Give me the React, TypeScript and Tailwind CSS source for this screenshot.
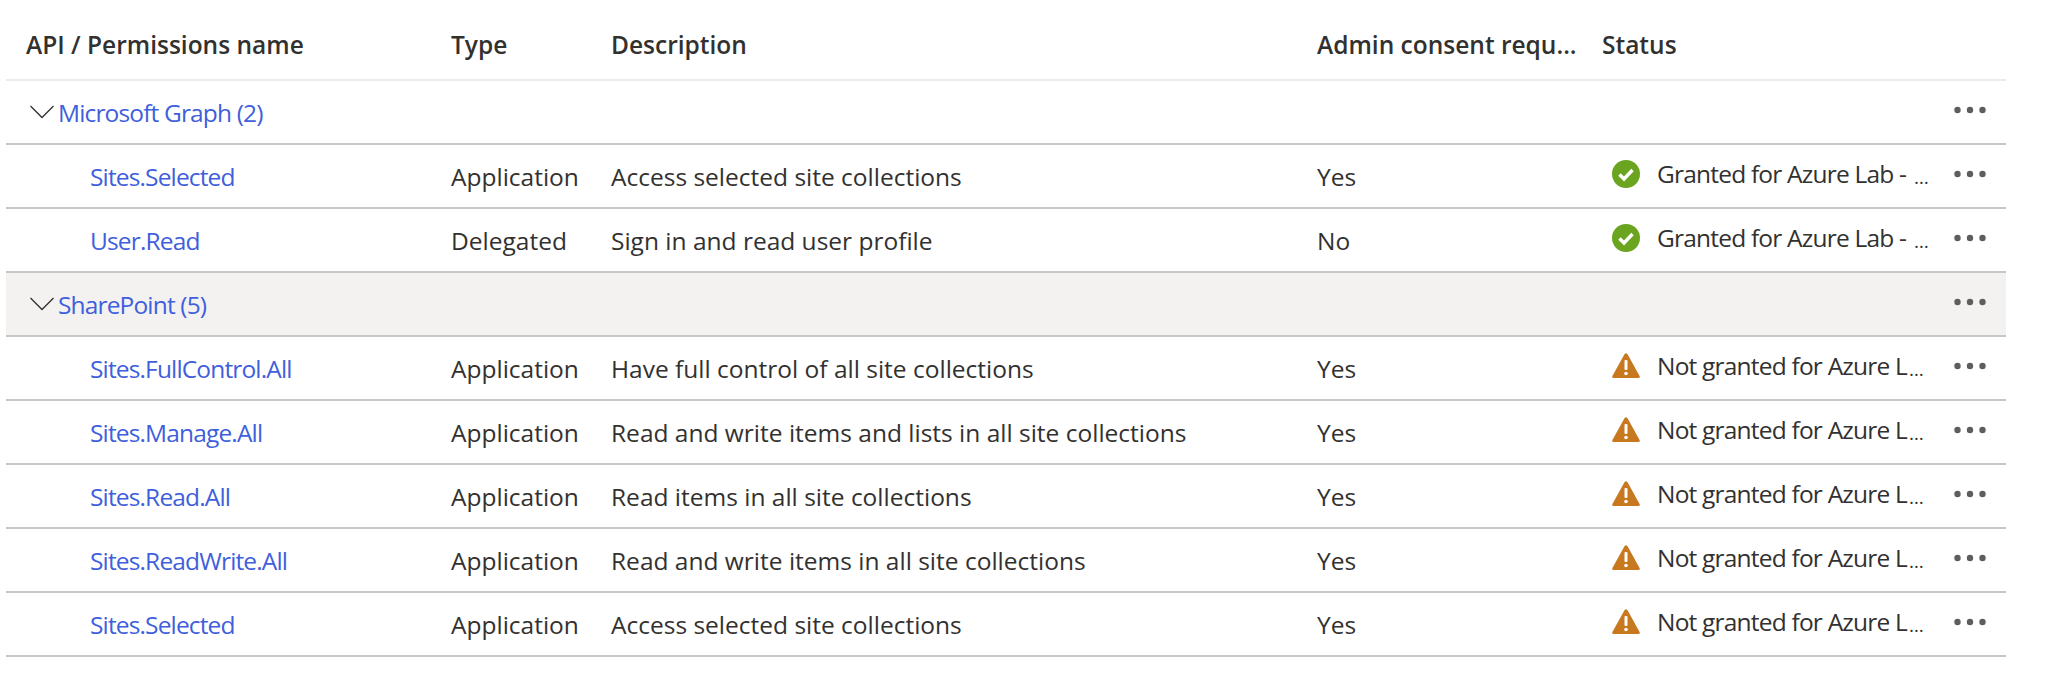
const groups = [
  {
    name: 'Microsoft Graph (2)',
    hovered: false,
    items: [
      { name: 'Sites.Selected', type: 'Application', description: 'Access selected site collections', consent: 'Yes', granted: true },
      { name: 'User.Read', type: 'Delegated', description: 'Sign in and read user profile', consent: 'No', granted: true },
    ],
  },
  {
    name: 'SharePoint (5)',
    hovered: true,
    items: [
      { name: 'Sites.FullControl.All', type: 'Application', description: 'Have full control of all site collections', consent: 'Yes', granted: false },
      { name: 'Sites.Manage.All', type: 'Application', description: 'Read and write items and lists in all site collections', consent: 'Yes', granted: false },
      { name: 'Sites.Read.All', type: 'Application', description: 'Read items in all site collections', consent: 'Yes', granted: false },
      { name: 'Sites.ReadWrite.All', type: 'Application', description: 'Read and write items in all site collections', consent: 'Yes', granted: false },
      { name: 'Sites.Selected', type: 'Application', description: 'Access selected site collections', consent: 'Yes', granted: false },
    ],
  },
];

const gridCols = 'grid grid-cols-[445px_160px_706px_285px_338px_66px]';

function MoreDots() {
  return (
    <svg width="32" height="8" viewBox="0 0 32 8" className="block text-[#605e5c]">
      <circle cx="3.5" cy="4" r="3.2" fill="currentColor" />
      <circle cx="16" cy="4" r="3.2" fill="currentColor" />
      <circle cx="28.5" cy="4" r="3.2" fill="currentColor" />
    </svg>
  );
}

function Chevron() {
  return (
    <svg width="24" height="14" viewBox="0 0 24 14" className="shrink-0 -translate-y-[2px]">
      <path d="M0.5 1 L12 12.5 L23.5 1" fill="none" stroke="#323130" strokeWidth="1.3" />
    </svg>
  );
}

function GrantedIcon() {
  return (
    <svg width="28" height="28" viewBox="0 0 28 28" className="shrink-0">
      <circle cx="14" cy="14" r="14" fill="#6ba41f" />
      <path d="M7.5 14.5 L12 19 L20.5 10" fill="none" stroke="#fff" strokeWidth="3.4" />
    </svg>
  );
}

function WarningIcon() {
  return (
    <svg width="28" height="26" viewBox="0 0 28 26" className="shrink-0">
      <path
        d="M12.6 1 Q14 -0.4 15.4 1 L27.6 23 Q28.4 25 26.2 25 L1.8 25 Q-0.4 25 0.4 23 Z"
        fill="#c8781e"
      />
      <rect x="12.5" y="7" width="3" height="10" rx="1" fill="#fff" />
      <circle cx="14" cy="20.5" r="1.8" fill="#fff" />
    </svg>
  );
}

function StatusCell({ granted }: { granted: boolean }) {
  return (
    <div className="flex items-center pl-[10px] -translate-y-[2px]">
      <div className="w-[28px] flex justify-center">{granted ? <GrantedIcon /> : <WarningIcon />}</div>
      <div className="ml-[17px] flex items-end tracking-[-0.8px] whitespace-nowrap">
        <span>{granted ? 'Granted for Azure Lab -' : 'Not granted for Azure L'}</span>
        <span className={granted ? 'ml-[8px] text-[19px] tracking-normal leading-[30px]' : 'ml-[2px] text-[19px] tracking-normal leading-[30px]'}>…</span>
      </div>
    </div>
  );
}

export default function App() {
  return (
    <div className="w-[2064px] h-[689px] bg-white overflow-hidden pl-[6px] font-['Open_Sans','Liberation_Sans',sans-serif] text-[24.5px] text-[#323130]">
      <div className="w-[2000px]">
        <div className={`${gridCols} h-[81px] items-center pt-[11px] font-semibold border-b-2 border-[#edebe9] whitespace-nowrap`}>
          <div className="pl-[20px]">API / Permissions name</div>
          <div>Type</div>
          <div>Description</div>
          <div>Admin consent requ...</div>
          <div>Status</div>
          <div />
        </div>
        {groups.map((group) => (
          <div key={group.name}>
            <div
              className={`${gridCols} h-[64px] items-center border-b-2 border-[#c8c8c8] ${group.hovered ? 'bg-[#f3f2f1]' : ''}`}
            >
              <div className="col-span-5 flex items-center pt-[3px] pl-[24px] text-[#3f5fdc] tracking-[-0.85px]">
                <Chevron />
                <span className="ml-[4px]">{group.name}</span>
              </div>
              <div className="pl-[14px] -translate-y-[2px]">
                <MoreDots />
              </div>
            </div>
            {group.items.map((item) => (
              <div
                key={item.name + group.name}
                className={`${gridCols} h-[64px] items-center border-b-2 border-[#c8c8c8] whitespace-nowrap`}
              >
                <div className="pt-[3px] pl-[84px] text-[#3f5fdc] tracking-[-0.85px]">{item.name}</div>
                <div className="pt-[3px]">{item.type}</div>
                <div className="pt-[3px]">{item.description}</div>
                <div className="pt-[3px]">{item.consent}</div>
                <StatusCell granted={item.granted} />
                <div className="pl-[14px] -translate-y-[2px]">
                  <MoreDots />
                </div>
              </div>
            ))}
          </div>
        ))}
      </div>
    </div>
  );
}
